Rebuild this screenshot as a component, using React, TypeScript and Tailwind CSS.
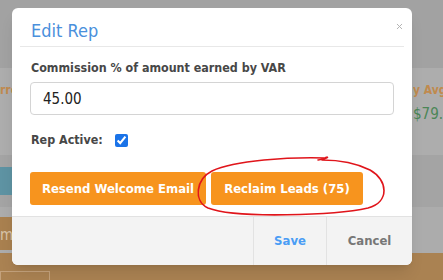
import { X } from 'lucide-react';

const font = { fontFamily: '"DejaVu Sans Condensed", "DejaVu Sans", Verdana, sans-serif' };

const EditRepModal = () => {
    return (
        <div className="absolute left-[12px] top-[8px] w-[400px] bg-white rounded-[6px] shadow-lg" style={font}>
            {/* Header */}
            <div className="mx-[8px] px-[11px] pt-[12px] pb-[4px] border-b border-[#e8e8e8]">
                <h2 className="text-[18px] leading-[22px] text-[#4a90dc]">Edit Rep</h2>
            </div>
            <button className="absolute right-[8px] top-[14px] text-[#b0b0b0]">
                <X size={9} strokeWidth={2.5} />
            </button>

            {/* Body */}
            <div className="px-[18px] pt-[13px] pb-[11px]">
                <label className="block pl-[1px] text-[12.4px] leading-[16px] font-bold text-[#474747]">
                    Commission % of amount earned by VAR
                </label>
                <input
                    defaultValue="45.00"
                    className="mt-[6px] w-[364px] h-[33px] px-[12px] rounded-[4px] border border-[#d4d4d4] text-[15px] text-[#222] outline-none"
                />
                <div className="mt-[15px] h-[20px] flex items-center gap-[12px] pl-[1px]">
                    <span className="text-[12.4px] font-bold text-[#474747]">Rep Active:</span>
                    <input type="checkbox" defaultChecked className="w-[13px] h-[13px] accent-[#1a73e8]" />
                </div>
                <div className="mt-[22px] flex gap-[5px]">
                    <button className="h-[33px] w-[176px] rounded-[3px] bg-[#f7941e] text-white text-[13px] font-bold">
                        Resend Welcome Email
                    </button>
                    <button className="h-[33px] w-[152px] rounded-[3px] bg-[#f7941e] text-white text-[13px] font-bold">
                        Reclaim Leads (75)
                    </button>
                </div>
            </div>

            {/* Footer */}
            <div className="h-[49px] flex justify-end border-t border-[#e2e2e2] bg-[#f3f3f3] rounded-b-[6px]">
                <button className="w-[73px] border-l border-[#e2e2e2] text-[13px] font-bold text-[#4a9df5]">Save</button>
                <button className="w-[86px] border-l border-[#e2e2e2] text-[13px] font-bold text-[#777]">Cancel</button>
            </div>
        </div>
    );
};

export default function App() {
    return (
        <div className="relative w-[443px] h-[280px] overflow-hidden bg-[#a2a2a2]" style={font}>
            {/* Dimmed page behind the modal */}
            <div className="h-[68px] bg-[#a2a2a2]" />
            <div className="h-[87px] bg-[#adadad] flex justify-between">
                <div className="pt-[13px] text-[12px] font-bold text-[#c08a4e] whitespace-nowrap">rrent Month</div>
                <div className="w-[30px] pt-[13px] whitespace-nowrap overflow-hidden">
                    <div className="text-[12px] font-bold text-[#c08a4e]">y Avg G</div>
                    <div className="mt-[4px] text-[15px] text-[#4b8657]">$79.6</div>
                </div>
            </div>
            <div className="h-[52px] bg-[#a4a4a4] pt-[12px]">
                <div className="h-[28px] w-[40px] bg-[#5e93a3] border-r-[5px] border-[#b2b2b2]" />
            </div>
            <div className="h-[46px] bg-[#acacac] pt-[10px]">
                <div className="h-[33px] w-[80px] bg-[#a9804f] pt-[7px] text-[15px] text-[#d8c4a8]">mi</div>
            </div>
            <div className="h-[27px] bg-[#aa8252] pt-[18px]">
                <div className="h-[20px] w-[50px] border border-[#c4a27c]" />
            </div>

            <EditRepModal />

            {/* Red hand-drawn annotation */}
            <svg className="absolute left-0 top-0 pointer-events-none" width="443" height="280" viewBox="0 0 443 280">
                <path
                    d="M 318 160 C 332 158 327 156 325 158 C 290 157 235 160 212 171 C 196 179 193 201 208 208 C 236 219 336 215 368 208 C 390 202 388 180 370 170 C 356 163 340 160 322 160"
                    fill="none"
                    stroke="#e0151b"
                    strokeWidth="1.6"
                    strokeLinecap="round"
                />
            </svg>
        </div>
    );
}
